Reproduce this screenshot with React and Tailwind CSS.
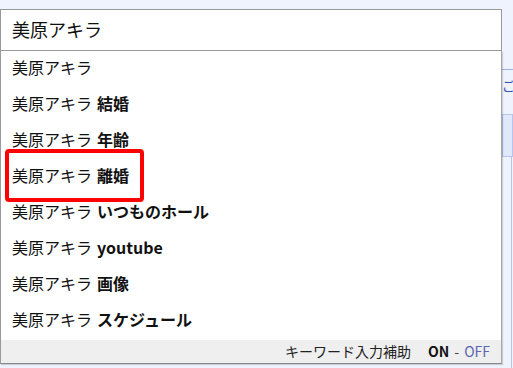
import React from 'react';

const font = { fontFamily: '"Noto Sans CJK JP", "Noto Sans", sans-serif' };

const suggestions = [
  '',
  '結婚',
  '年齢',
  '離婚',
  'いつものホール',
  'youtube',
  '画像',
  'スケジュール',
];

export default function App() {
  return (
    <div className="relative w-[513px] h-[368px] overflow-hidden bg-[#eef3fd] text-[#111]" style={font}>
      <div className="flex pt-[9px]">
        {/* search box + suggest list */}
        <div className="relative w-[502px] shrink-0">
          <div className="h-[42px] bg-white border border-[#9a9a9a] flex items-center pl-[11px] pb-[3px] text-[18px] leading-none">
            美原アキラ
          </div>
          <div className="bg-white border-x border-b border-l-[#9a9a9a] border-r-[#a8a8a8] border-b-[#888] shadow-[1px_1px_1px_rgba(0,0,0,0.15)]">
            <ul className="pb-[1px]">
              {suggestions.map((s, i) => (
                <li key={i} className="h-[36px] flex items-center pl-[11px] pb-[4px] text-[16px] leading-none">
                  <span>美原アキラ</span>
                  {s && <span className="font-bold ml-[5px]">{s}</span>}
                </li>
              ))}
            </ul>
            <div className="h-[23px] bg-[#efefef] flex items-center justify-end pr-[11px] pb-[1px] text-[14px] leading-none">
              <span className="text-[#222]">キーワード入力補助</span>
              <span className="font-bold ml-[17px]">ON</span>
              <span className="mx-[5px] text-[#444]">-</span>
              <span className="text-[#5b67b0]">OFF</span>
            </div>
          </div>
          {/* highlight annotation */}
          <div className="absolute left-[5px] top-[140px] w-[139px] h-[53px] border-[4px] border-[#f00] rounded-[4px]"></div>
        </div>
        {/* right side column, mostly cropped */}
        <div className="flex-1 pt-[60px] overflow-hidden">
          <div className="border-t border-[#9fb3e0] pt-[9px] text-[13px] text-[#3453b5] leading-none whitespace-nowrap">ご検索</div>
          <div className="mt-[22px] h-[43px] bg-[#e0e8fb] border border-[#b5c5ec]"></div>
          <div className="ml-[9px] h-[250px] border-l border-[#b5c5ec]"></div>
        </div>
      </div>
      {/* content below, cropped by window */}
      <div className="flex items-start whitespace-nowrap">
        <div className="w-[53px] h-[6px] bg-[#999]"></div>
        <div className="ml-[4px] mt-[1px] text-[16px] text-[#2a47b0] leading-none">いいオトラブルにお役立ち入門</div>
        <span className="ml-[3px] mt-[1px] px-[4px] h-[14px] rounded-full bg-[#f6a800] text-white text-[11px] font-bold leading-none">NEW</span>
        <span className="ml-[6px] mt-[1px] text-[14px] text-[#2a47b0] leading-none">□ 111</span>
      </div>
    </div>
  );
}
